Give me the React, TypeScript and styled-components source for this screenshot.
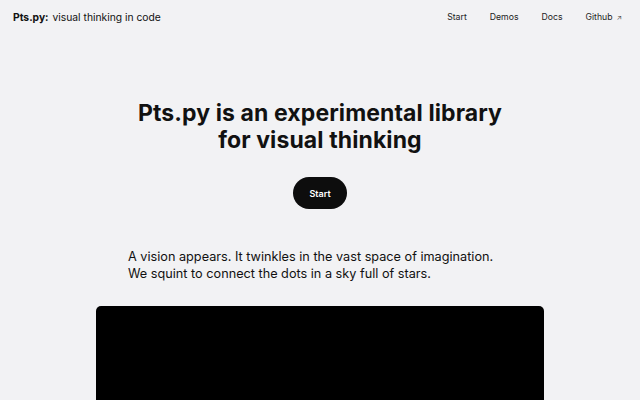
import React from "react";
import styled, { createGlobalStyle } from "styled-components";

const Global = createGlobalStyle`
  html, body { margin: 0; padding: 0; background: #f2f2f4; }
  body { font-family: "Inter", "Liberation Sans", sans-serif; color: #111; overflow: hidden; }
`;

const Page = styled.div`
  width: 640px;
  height: 400px;
  overflow: hidden;
  background: #f2f2f4;
  display: flex;
  flex-direction: column;
  & > * { flex-shrink: 0; }
`;

const Nav = styled.nav`
  height: 34px;
  display: flex;
  align-items: center;
  justify-content: space-between;
  padding: 0 18px 0 13px;
`;

const Brand = styled.div`
  font-size: 10.3px;
  color: #111;
  display: flex;
  gap: 4px;
  b { font-weight: 700; }
`;

const Links = styled.div`
  display: flex;
  gap: 23px;
  font-size: 8.7px;
  color: #222;
`;

const Link = styled.a`
  color: inherit;
  text-decoration: none;
`;

const Arrow = styled.span`
  font-size: 7px;
  margin-left: 4px;
  color: #444;
`;

const Hero = styled.section`
  display: flex;
  flex-direction: column;
  align-items: center;
  padding-top: 66px;
`;

const Title = styled.h1`
  margin: 0;
  font-size: 23px;
  line-height: 27px;
  font-weight: 700;
  text-align: center;
  letter-spacing: 0.1px;
`;

const StartButton = styled.button`
  margin-top: 23px;
  width: 54px;
  height: 32px;
  border-radius: 16px;
  border: none;
  background: #0d0d0d;
  color: #fff;
  font-family: inherit;
  font-size: 9px;
  font-weight: 600;
`;

const Intro = styled.p`
  margin: 39px 0 0 128px;
  font-size: 12.7px;
  line-height: 17px;
  color: #111;
  align-self: flex-start;
`;

const Canvas = styled.div`
  margin: 24px 0 0 96px;
  width: 448px;
  height: 200px;
  background: #000;
  border-radius: 5px;
`;

export default function App() {
  return (
    <Page>
      <Global />
      <Nav>
        <Brand>
          <b>Pts.py:</b>
          <span>visual thinking in code</span>
        </Brand>
        <Links>
          <Link>Start</Link>
          <Link>Demos</Link>
          <Link>Docs</Link>
          <Link>
            Github<Arrow>↗</Arrow>
          </Link>
        </Links>
      </Nav>
      <Hero>
        <Title>
          Pts.py is an experimental library
          <br />
          for visual thinking
        </Title>
        <StartButton>Start</StartButton>
        <Intro>
          A vision appears. It twinkles in the vast space of imagination.
          <br />
          We squint to connect the dots in a sky full of stars.
        </Intro>
      </Hero>
      <Canvas />
    </Page>
  );
}
